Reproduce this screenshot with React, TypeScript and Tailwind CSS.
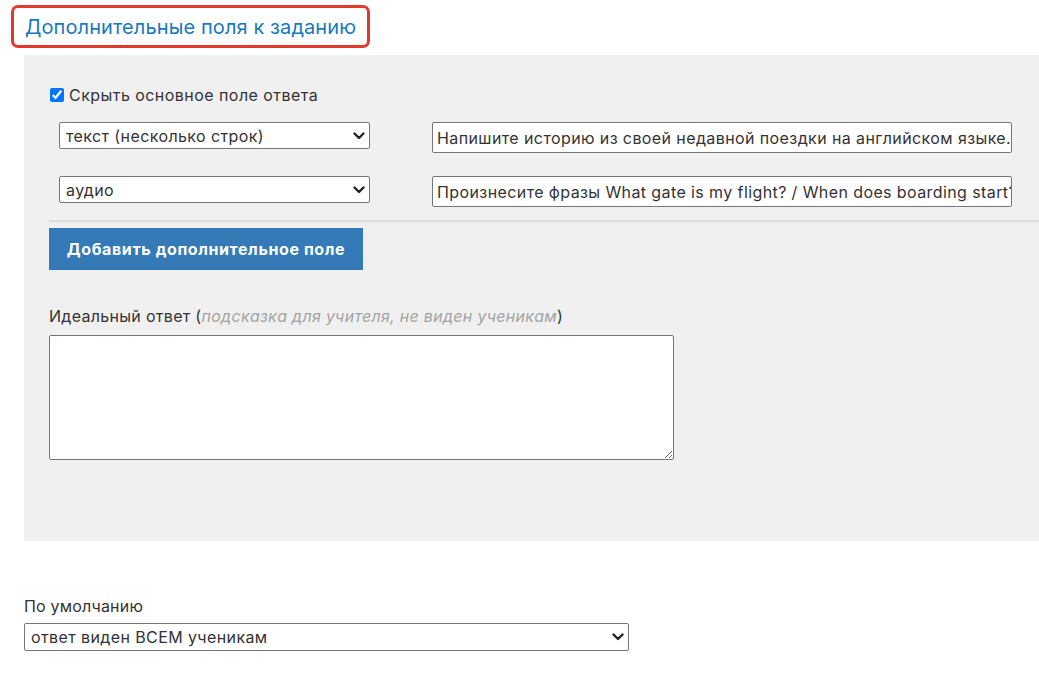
import React from "react";

function Chevron() {
  return (
    <svg width="12" height="8" viewBox="0 0 12 8" className="pointer-events-none absolute right-[5px] top-1/2 -translate-y-1/2">
      <path d="M1.5 1.5 L6 6 L10.5 1.5" fill="none" stroke="#222" strokeWidth="2.4" strokeLinecap="round" strokeLinejoin="round" />
    </svg>
  );
}

function Select({ value, className }: { value: string; className: string }) {
  return (
    <div className={"relative " + className}>
      <select
        defaultValue={value}
        className="h-full w-full appearance-none rounded-[2px] border border-[#767676] bg-white pl-[6px] pr-[20px] text-[16px] tracking-[0.4px] text-[#333] outline-none"
      >
        <option>{value}</option>
      </select>
      <Chevron />
    </div>
  );
}

export default function App() {
  return (
    <div className="h-[677px] w-full overflow-hidden bg-white text-[#333]" style={{ fontFamily: "Inter, 'Noto Sans', sans-serif" }}>
      <div className="pl-[11px] pt-[5px]">
        <div className="inline-flex h-[43px] items-center rounded-[7px] border-[3px] border-[#e3392c] px-[11px] pt-[1px] text-[20px] tracking-[0.1px] text-[#1779bf]">
          Дополнительные поля к заданию
        </div>
      </div>

      <div className="ml-[24px] mt-[7px] flex h-[486px] flex-col bg-[#f0f0f0] pl-[25px] pt-[30px]">
        <label className="flex h-[20px] items-center gap-[5px] pl-[1px] text-[16px] tracking-[0.45px]">
          <input type="checkbox" defaultChecked className="h-[14px] w-[14px]" />
          <span>Скрыть основное поле ответа</span>
        </label>

        <div className="mt-[17px] flex items-start pl-[10px]">
          <Select value="текст (несколько строк)" className="h-[27px] w-[311px]" />
          <input
            readOnly
            value="Напишите историю из своей недавной поездки на английском языке."
            className="ml-[62px] h-[31px] w-[580px] rounded-[2px] border border-[#767676] bg-white pl-[4px] text-[16px] tracking-[0.4px] text-[#333] outline-none"
          />
        </div>

        <div className="mt-[23px] flex items-start pl-[10px]">
          <Select value="аудио" className="h-[27px] w-[311px]" />
          <input
            readOnly
            value="Произнесите фразы What gate is my flight? / When does boarding start?"
            className="ml-[62px] h-[31px] w-[580px] rounded-[2px] border border-[#767676] bg-white pl-[4px] text-[16px] tracking-[0.4px] text-[#333] outline-none"
          />
        </div>

        <div className="mt-[13px] h-[2px] bg-[#dcdcdc]" />

        <button className="mt-[6px] h-[42px] w-[314px] bg-[#337ab7] text-[16px] font-bold tracking-[0.6px] text-white">
          Добавить дополнительное поле
        </button>

        <div className="mt-[36px] text-[16px] leading-[20px] tracking-[0.3px]">
          Идеальный ответ (<span className="italic text-[#a3a3a3]">подсказка для учителя, не виден ученикам</span>)
        </div>

        <textarea className="mt-[9px] h-[125px] w-[625px] rounded-[2px] border border-[#767676] bg-white outline-none" />
      </div>

      <div className="ml-[24px] mt-[55px] text-[16px] leading-[20px] tracking-[0.2px]">По умолчанию</div>
      <Select value="ответ виден ВСЕМ ученикам" className="ml-[24px] mt-[7px] h-[28px] w-[605px]" />
    </div>
  );
}
